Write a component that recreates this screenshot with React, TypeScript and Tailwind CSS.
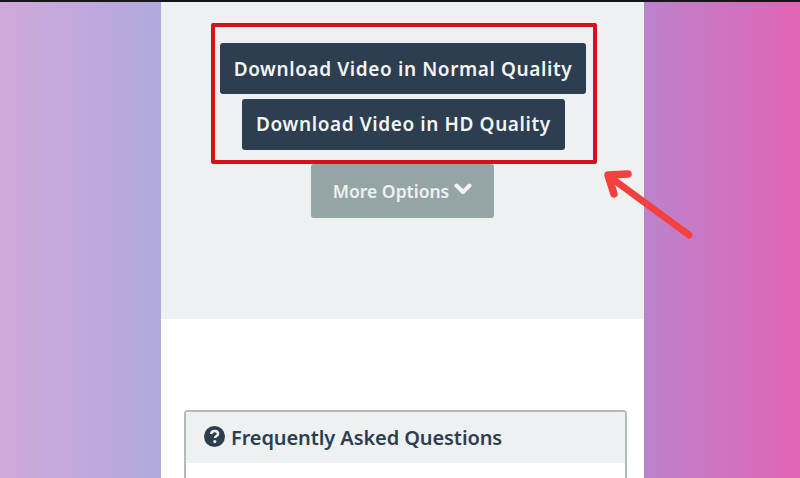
export default function App() {
  const font = { fontFamily: '"Noto Sans", "Open Sans", sans-serif' };
  return (
    <div
      style={font}
      className="relative w-[800px] h-[478px] overflow-hidden flex justify-start pl-[161px] border-t-2 border-[#15151c] bg-[linear-gradient(90deg,#d0a8da_0%,#b1a9de_20%,#bb82cc_80.5%,#e265b5_100%)]"
    >
      <div className="w-[483px] h-[476px] bg-white flex flex-col shrink-0">
        <div className="h-[317px] bg-[#edf1f2] flex flex-col items-center pt-[41px] shrink-0">
          <button className="ml-[1px] w-[366px] h-[51px] pt-[1px] rounded-[3px] bg-[#2c3e50] text-[#f2f5f6] text-[19px] font-semibold tracking-[0.6px] flex items-center justify-center whitespace-nowrap">
            Download Video in Normal Quality
          </button>
          <button className="ml-[2px] mt-[5px] w-[323px] h-[51px] rounded-[3px] bg-[#2c3e50] text-[#f2f5f6] text-[19px] font-semibold tracking-[0.6px] flex items-center justify-center whitespace-nowrap">
            Download Video in HD Quality
          </button>
          <button className="mt-[14px] w-[183px] h-[54px] rounded-[3px] bg-[#95a5a6] text-[#eef1f2] text-[17.5px] font-semibold flex items-center justify-center gap-[5px] whitespace-nowrap">
            More Options
            <svg width="18" height="14" viewBox="0 0 18 14" className="mb-[4px]">
              <path d="M2.5 3.5 L9 10 L15.5 3.5" fill="none" stroke="#f2f5f6" strokeWidth="4" strokeLinecap="round" strokeLinejoin="round" />
            </svg>
          </button>
        </div>
        <div className="ml-[23px] w-[443px] mt-[91px] flex-1 border-2 border-b-0 border-[#b4b9bb] rounded-t-[4px] bg-white">
          <div className="h-[51px] bg-[#edf1f2] flex items-center pl-[18px] gap-[6px] text-[#2c3e50] text-[20px] font-semibold tracking-[-0.1px]">
            <svg width="21" height="21" viewBox="0 0 21 21" className="mb-[3px] shrink-0">
              <circle cx="10.5" cy="10.5" r="10.5" fill="#2c3e50" />
              <path d="M7.2 8 C7.3 5.9 8.8 4.9 10.7 4.9 C12.7 4.9 14.1 6.1 14.1 7.8 C14.1 10 11 10 11 12" fill="none" stroke="#edf1f2" strokeWidth="2.5" />
              <circle cx="10.8" cy="15.6" r="1.6" fill="#edf1f2" />
            </svg>
            <span>Frequently Asked Questions</span>
          </div>
        </div>
      </div>
      {/* annotation: red highlight box */}
      <div className="absolute left-[211px] top-[21px] w-[386px] h-[141px] border-[4px] border-[#d8101c] rounded-[2px]" />
      {/* annotation: arrow */}
      <svg className="absolute left-[590px] top-[148px]" width="120" height="100" viewBox="0 0 120 100">
        <path d="M99 85 L24 30" fill="none" stroke="#f5403f" strokeWidth="7" strokeLinecap="round" />
        <path d="M38 24 L18 25 L24 44" fill="none" stroke="#f5403f" strokeWidth="7.5" strokeLinecap="round" strokeLinejoin="round" />
      </svg>
    </div>
  );
}
